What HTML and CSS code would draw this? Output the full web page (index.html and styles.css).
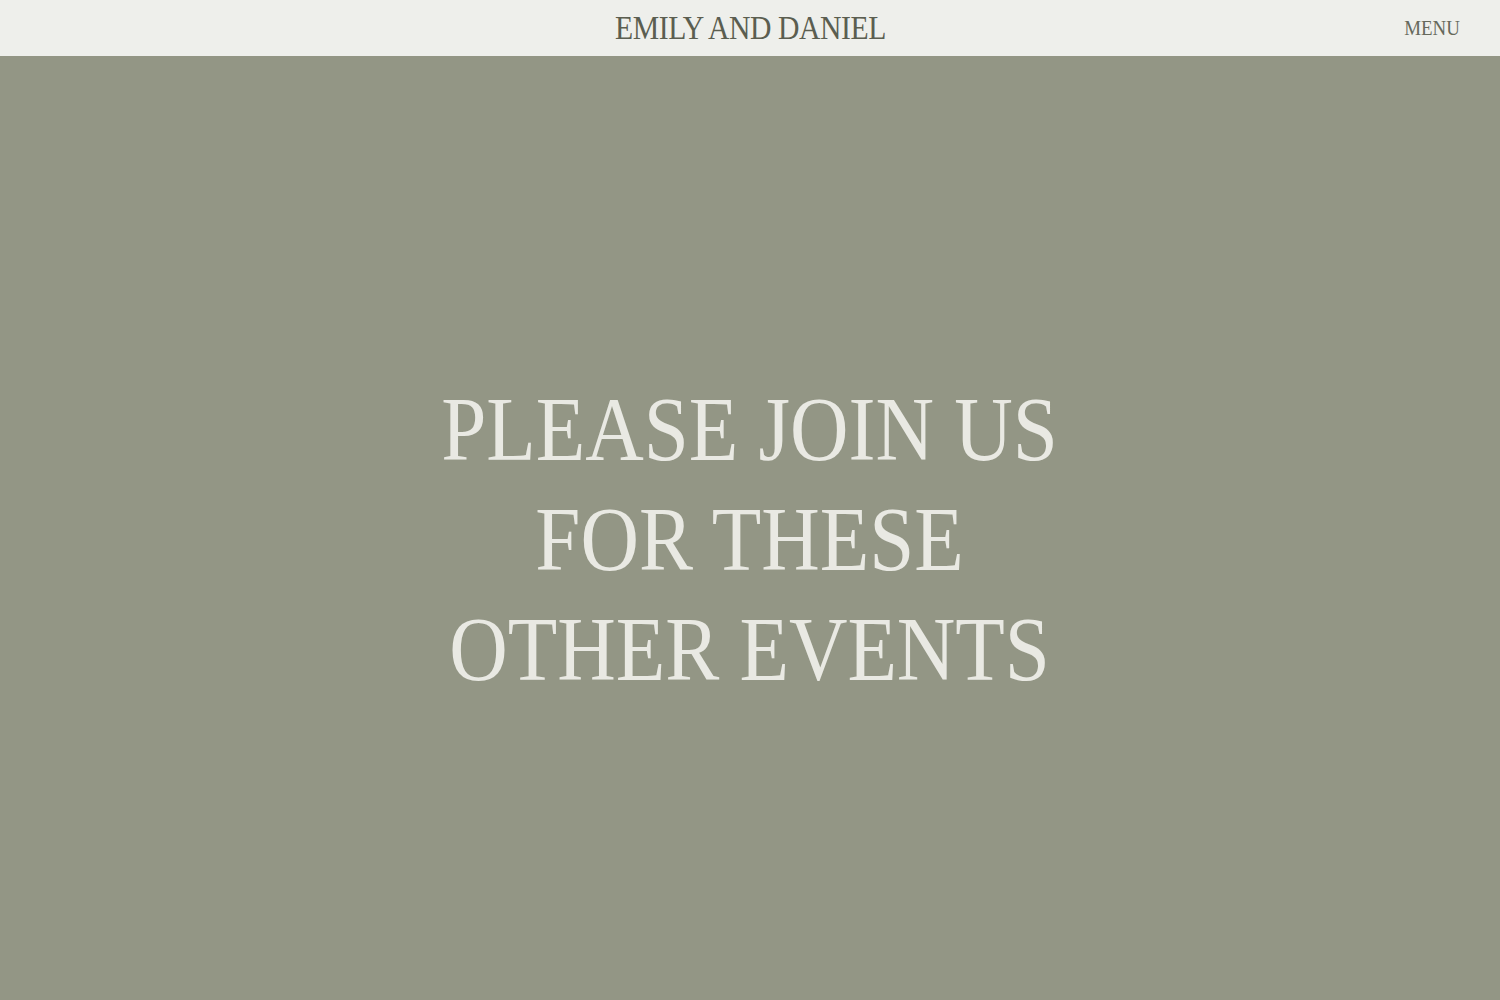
FILE: index.html
```html
<!DOCTYPE html>
<html lang="en">

<head>
    <meta charset="UTF-8">
    <meta name="viewport" content="width=device-width, initial-scale=1.0">
    <title>Emily and Daniel</title>
    <link rel="stylesheet" href="styles.css">
</head>

<body>

    <header class="site-header">
        <div class="header-spacer"></div>
        <a class="site-title" href="#">EMILY AND DANIEL</a>
        <a class="menu-link" href="#">MENU</a>
    </header>

    <main class="hero">
        <h1 class="hero-title">PLEASE JOIN US<br>FOR THESE<br>OTHER EVENTS</h1>
    </main>

</body>

</html>
```

FILE: styles.css
```css
body {
    margin: 0;
    padding: 0;
    font-family: 'Liberation Serif', 'Times New Roman', serif;
    background-color: #939685;
}

/* narrow display look for the serif caps */
.site-title,
.menu-link,
.hero-title {
    display: inline-block;
    transform: scaleX(0.9);
}

.site-header {
    height: 56px;
    display: grid;
    grid-template-columns: 1fr auto 1fr;
    align-items: center;
    padding: 0 40px;
    background-color: #eeefeb;
}

.site-title {
    color: #5b5e50;
    font-size: 33px;
    letter-spacing: -0.5px;
    text-decoration: none;
}

.menu-link {
    justify-self: end;
    color: #66695b;
    font-size: 21px;
    text-decoration: none;
    transform-origin: right center;
}

.hero {
    height: 944px;
    box-sizing: border-box;
    padding-top: 24px;
    display: flex;
    align-items: center;
    justify-content: center;
}

.hero-title {
    margin: 0;
    color: #e9e9e3;
    font-size: 90px;
    font-weight: normal;
    line-height: 110px;
    text-align: center;
}
```
